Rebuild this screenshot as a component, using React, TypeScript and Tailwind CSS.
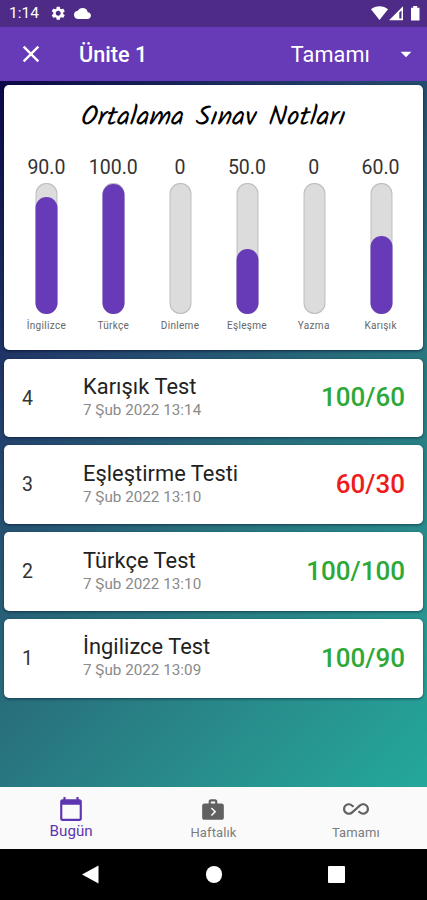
import { MdAllInclusive, MdArrowDropDown, MdClose, MdNextWeek, MdSettings } from "react-icons/md";

const averages = [
  { label: "İngilizce", value: "90.0", percent: 90 },
  { label: "Türkçe", value: "100.0", percent: 100 },
  { label: "Dinleme", value: "0", percent: 0 },
  { label: "Eşleşme", value: "50.0", percent: 50 },
  { label: "Yazma", value: "0", percent: 0 },
  { label: "Karışık", value: "60.0", percent: 60 },
];

const tests = [
  { no: 4, title: "Karışık Test", date: "7 Şub 2022 13:14", score: "100/60", passed: true },
  { no: 3, title: "Eşleştirme Testi", date: "7 Şub 2022 13:10", score: "60/30", passed: false },
  { no: 2, title: "Türkçe Test", date: "7 Şub 2022 13:10", score: "100/100", passed: true },
  { no: 1, title: "İngilizce Test", date: "7 Şub 2022 13:09", score: "100/90", passed: true },
];

function StatusBar() {
  return (
    <div className="flex h-[27px] shrink-0 items-center bg-[#4d2b86] pl-[9px] pr-[7px] text-white">
      <span className="w-[41px] pt-px text-[15.500px] leading-none">1:14</span>
      <MdSettings size={16.5} />
      <svg className="ml-[7px]" width="17" height="11" viewBox="0 4 24 16" preserveAspectRatio="none" fill="currentColor">
        <path d="M19.350 10.040A7.490 7.490 0 0 0 12 4C9.110 4 6.600 5.640 5.350 8.040A5.994 5.994 0 0 0 0 14c0 3.310 2.690 6 6 6h13c2.760 0 5-2.240 5-5 0-2.640-2.050-4.780-4.650-4.960z" />
      </svg>
      <svg className="ml-auto" width="49" height="17" viewBox="0 0 49 17" fill="currentColor">
        <path d="M0 4.300C4.500.2 12.500.2 17 4.300L8.500 15Z" />
        <path fillRule="evenodd" d="M18 15.300 32 1.300V15.300ZM28.300 7.500V13.600H30.500V5.400Z" />
        <path d="M40 2.800h2.200V1h4v1.800H48.500V15.500H40Z" />
      </svg>
    </div>
  );
}

function Toolbar() {
  return (
    <div className="flex h-[54px] shrink-0 items-center bg-[#673ab7] pl-[17px] pr-[8px] text-white">
      <MdClose size={28} />
      <h1 className="ml-[34px] pt-px text-[21.700px] font-medium leading-none">Ünite 1</h1>
      <span className="ml-auto pt-px text-[21.700px] leading-none tracking-[0.1px]">Tamamı</span>
      <MdArrowDropDown size={26} className="ml-[23px]" />
    </div>
  );
}

function AverageChart() {
  return (
    <section className="flex h-[265px] shrink-0 flex-col rounded-[5px] bg-white px-[9px] shadow-[0_1px_3px_rgba(0,0,30,0.6)]">
      <h2 className="flex h-[62px] -skew-x-6 items-center justify-center gap-[12px] whitespace-nowrap pt-[4px] font-[Kalam,Lato] text-[27.300px] leading-none text-black">
        <span>Ortalama</span>
        <span>Sınav</span>
        <span>Notları</span>
      </h2>
      <div className="grid grid-cols-6 pt-[11px]">
        {averages.map((item) => (
          <div key={item.label} className="flex flex-col items-center">
            <span className="h-[25px] text-[19.500px] leading-[20px] text-[#333]">{item.value}</span>
            <div className="flex h-[131px] w-[22px] translate-x-[0.5px] items-end rounded-full bg-[#dcdcdc] shadow-[inset_0_0_0_1px_#bdbdbd]">
              <div className="w-[22px] rounded-full bg-[#673ab7]" style={{ height: `${item.percent * 1.3}px` }} />
            </div>
            <span className="mt-[6px] text-[10px] leading-[12px] tracking-[0.3px] text-[#666]">{item.label}</span>
          </div>
        ))}
      </div>
    </section>
  );
}

function TestRow({ test }: { test: (typeof tests)[number] }) {
  return (
    <li className="flex h-[78.700px] shrink-0 items-center rounded-[5px] bg-white pl-[18px] pr-[18px] shadow-[0_1px_3px_rgba(0,0,30,0.5)]">
      <span className="w-[61px] pt-px text-[19.500px] leading-none text-[#333]">{test.no}</span>
      <div className="flex flex-col pb-[2px]">
        <span className="text-[21.800px] leading-[26px] tracking-[0.05px] text-[#222]">{test.title}</span>
        <span className="text-[15.200px] leading-[20px] tracking-[0.03px] text-[#8a8a8a]">{test.date}</span>
      </div>
      <span className={test.passed ? "ml-auto text-[26px] font-medium text-[#2ea836]" : "ml-auto text-[26px] font-medium text-[#ee1c1c]"}>
        {test.score}
      </span>
    </li>
  );
}

function BottomTabs() {
  return (
    <nav className="grid h-[62px] shrink-0 grid-cols-3 bg-[#fafafa] text-[#7c7c7c]">
      <div className="flex flex-col items-center pt-[9px] text-[#5e35b1]">
        <svg width="26" height="26" viewBox="0 0 24 24" fill="currentColor">
          <path d="M20 3h-1V1h-2v2H7V1H5v2H4c-1.100 0-2 .9-2 2v16c0 1.100.9 2 2 2h16c1.100 0 2-.9 2-2V5c0-1.100-.9-2-2-2zm0 18H4V8h16v13z" />
        </svg>
        <span className="text-[15.200px] leading-[18px]">Bugün</span>
      </div>
      <div className="flex flex-col items-center pt-[9px]">
        <MdNextWeek size={26} className="text-[#616161]" />
        <span className="mt-px text-[13px] leading-[19px] tracking-[0.1px]">Haftalık</span>
      </div>
      <div className="flex flex-col items-center pt-[9px]">
        <MdAllInclusive size={26} className="text-[#616161]" />
        <span className="mt-px text-[13px] leading-[19px] tracking-[0.1px]">Tamamı</span>
      </div>
    </nav>
  );
}

function SystemNavigation() {
  return (
    <div className="grid h-[51px] shrink-0 grid-cols-[180px_68px_177px] items-center justify-items-center bg-black text-white">
      <svg width="17" height="19" viewBox="0 0 17 19" fill="currentColor">
        <path d="M16.500.5V18.500L0 9.500Z" />
      </svg>
      <div className="size-[16.500px] rounded-full bg-white" />
      <div className="size-[17px] rounded-[1px] bg-white" />
    </div>
  );
}

export default function App() {
  return (
    <div className="flex h-[900px] w-[427px] flex-col overflow-hidden font-[Roboto,sans-serif]">
      <StatusBar />
      <Toolbar />
      <main className="flex min-h-0 flex-1 flex-col bg-linear-[135deg,#0c0847_0%,#233f6b_30%,#286f7c_56%,#288f8d_80%,#24a69a_98%] px-[4px] pt-[4px]">
        <AverageChart />
        <ul className="flex flex-col gap-[8.200px] pt-[8.500px]">
          {tests.map((test) => (
            <TestRow key={test.no} test={test} />
          ))}
        </ul>
      </main>
      <BottomTabs />
      <SystemNavigation />
    </div>
  );
}
